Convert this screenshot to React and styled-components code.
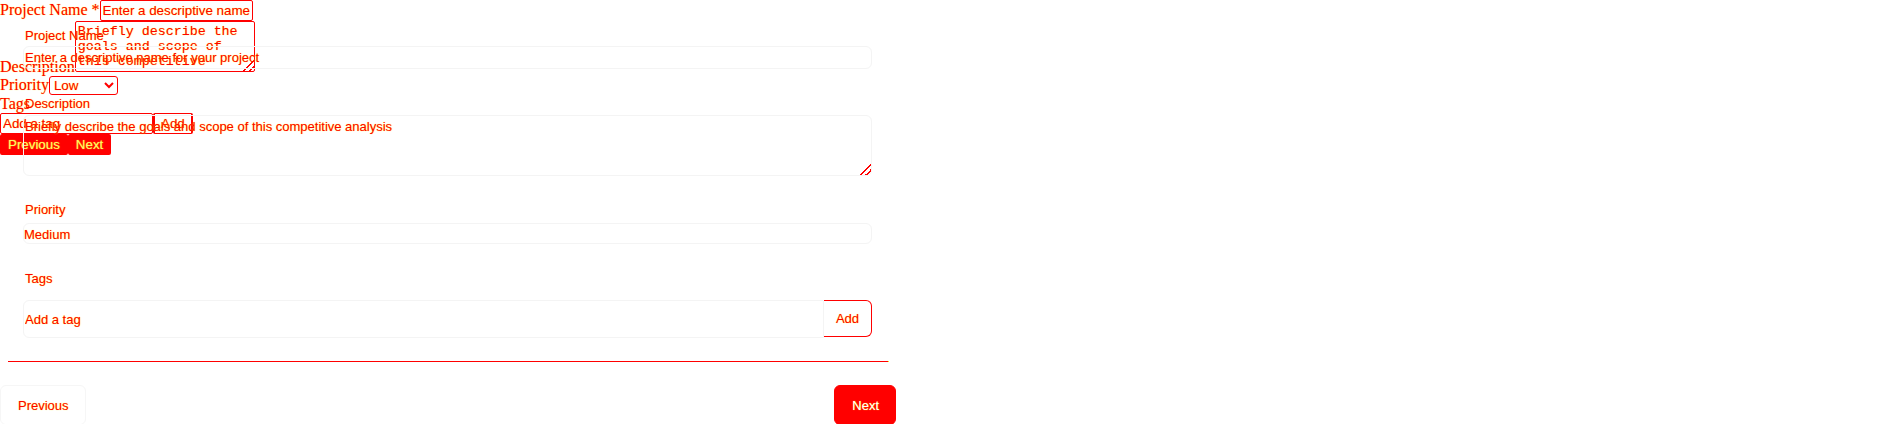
import React from 'react';
import styled, { createGlobalStyle } from 'styled-components';

const RED = '#ff0000';
const FRINGE = '0 0 1px rgba(255, 238, 0, 0.9)';
const FAINT = '#f4f4f4';
const RESIZER = `linear-gradient(135deg, transparent 62%, ${RED} 62%, ${RED} 69%, transparent 69%, transparent 80%, ${RED} 80%, ${RED} 87%, transparent 87%)`;

const GlobalStyle = createGlobalStyle`
  html, body {
    margin: 0;
    padding: 0;
    background: #ffffff;
  }
  body {
    font-family: "Liberation Serif", serif;
    font-size: 16px;
    color: ${RED};
  }
`;

const Page = styled.div`
  position: relative;
  width: 1904px;
  height: 424px;
  overflow: hidden;
`;

/* ---- bare form, browser-default look ---- */

const RawForm = styled.form`
  font-family: "Liberation Serif", serif;
  font-size: 16px;
  color: ${RED};
  text-shadow: ${FRINGE};
`;

const RawRow = styled.div``;

const RawLabel = styled.label``;

const RawInput = styled.input`
  box-sizing: border-box;
  width: 153px;
  height: 21px;
  padding: 1px 2px;
  border: 1px solid ${RED};
  border-radius: 2px;
  background: transparent;
  font-family: "Liberation Sans", Arial, sans-serif;
  font-size: 13.333px;
  color: ${RED};
  text-shadow: ${FRINGE};
  vertical-align: baseline;

  &::placeholder {
    color: ${RED};
    opacity: 1;
  }
`;

const RawTextarea = styled.textarea`
  box-sizing: border-box;
  width: 180px;
  height: 51px;
  padding: 2px;
  border: 1px solid ${RED};
  border-radius: 2px;
  background: transparent;
  font-family: "Liberation Mono", monospace;
  font-size: 13.333px;
  line-height: 15px;
  overflow: hidden;
  text-shadow: ${FRINGE};
  vertical-align: baseline;

  &::placeholder {
    color: ${RED};
    opacity: 1;
  }

  &::-webkit-resizer {
    background: ${RESIZER};
  }
`;

const RawSelect = styled.select`
  box-sizing: border-box;
  width: 69px;
  height: 19px;
  border: 1px solid ${RED};
  border-radius: 3px;
  background: transparent;
  font-family: "Liberation Sans", Arial, sans-serif;
  font-size: 13.333px;
  color: ${RED};
  text-shadow: ${FRINGE};
`;

const RawButton = styled.button`
  box-sizing: border-box;
  height: 21px;
  padding: 1px 6px;
  margin: 0;
  border: 2px solid ${RED};
  border-width: ${(p) => (p.$filled ? '2px' : '1px 2px')};
  border-radius: 2px;
  background: ${(p) => (p.$filled ? RED : 'transparent')};
  font-family: "Liberation Sans", Arial, sans-serif;
  font-size: 13.333px;
  color: ${(p) => (p.$filled ? '#fff36a' : RED)};
  text-shadow: ${(p) => (p.$filled ? '0 0 1px #ffee00' : FRINGE)};
  vertical-align: baseline;
`;

/* ---- styled wizard panel, drawn over the bare form ---- */

const Panel = styled.div`
  position: absolute;
  top: 0;
  left: 0;
  width: 896px;
  font-family: "Liberation Sans", Arial, sans-serif;
  font-size: 13px;
  line-height: 15px;
  color: ${RED};
  text-shadow: ${FRINGE};
`;

const Body = styled.div`
  display: flex;
  flex-direction: column;
  padding: 28px 24px 0 23px;
`;

const Field = styled.div`
  display: flex;
  flex-direction: column;
  gap: ${(p) => p.$gap || 4}px;
  margin-top: ${(p) => p.$top || 0}px;
`;

const Label = styled.label`
  display: block;
  padding-left: 2px;
`;

const TextInput = styled.input`
  box-sizing: border-box;
  width: 100%;
  height: ${(p) => p.$h || 23}px;
  padding: 0 1px;
  border: 1px solid ${FAINT};
  border-radius: ${(p) => (p.$joined ? '6px 0 0 6px' : '6px')};
  background: transparent;
  font: inherit;
  color: ${RED};
  text-shadow: ${FRINGE};
  outline: none;

  &::placeholder {
    color: ${RED};
    opacity: 1;
  }
`;

const TextArea = styled.textarea`
  box-sizing: border-box;
  width: 100%;
  height: 61px;
  padding: 3px 1px;
  border: 1px solid ${FAINT};
  border-radius: 6px;
  background: transparent;
  font: inherit;
  color: ${RED};
  text-shadow: ${FRINGE};
  resize: vertical;
  outline: none;

  &::placeholder {
    color: ${RED};
    opacity: 1;
  }

  &::-webkit-resizer {
    background: ${RESIZER};
  }
`;

const Select = styled.select`
  box-sizing: border-box;
  width: 100%;
  height: 21px;
  padding: 1px 0 0 0;
  border: 1px solid ${FAINT};
  border-radius: 6px;
  background: transparent;
  appearance: none;
  font: inherit;
  color: ${RED};
  text-shadow: ${FRINGE};
  outline: none;
`;

const TagRow = styled.div`
  display: flex;
  align-items: flex-start;
`;

const AddButton = styled.button`
  box-sizing: border-box;
  flex: none;
  width: 48px;
  height: 37px;
  border: 1px solid ${RED};
  border-left: none;
  border-radius: 0 6px 6px 0;
  background: transparent;
  font: inherit;
  color: ${RED};
  text-shadow: ${FRINGE};
`;

const Divider = styled.div`
  height: 1px;
  margin: 23px 8px 0;
  background: ${RED};
  box-shadow: 1px 0 0 #ffee00;
`;

const Footer = styled.div`
  display: flex;
  justify-content: space-between;
  align-items: center;
  margin-top: 23px;
`;

const NavButton = styled.button`
  box-sizing: border-box;
  height: 40px;
  padding: 0 16px 0 17px;
  border: 1px solid ${(p) => (p.$primary ? RED : '#f6f6f6')};
  border-radius: 6px;
  background: ${(p) => (p.$primary ? RED : 'transparent')};
  font: inherit;
  color: ${(p) => (p.$primary ? '#ffffff' : RED)};
  text-shadow: ${(p) => (p.$primary ? '0 0 1px #ffee00' : FRINGE)};
`;

const App = () => {
  return (
    <Page>
      <GlobalStyle />

      <RawForm onSubmit={(e) => e.preventDefault()}>
        <RawRow>
          <RawLabel>Project Name *</RawLabel><RawInput placeholder="Enter a descriptive name" />
        </RawRow>
        <RawRow>
          <RawLabel>Description</RawLabel><RawTextarea rows={3} placeholder="Briefly describe the goals and scope of this competitive analysis" />
        </RawRow>
        <RawRow>
          <RawLabel>Priority</RawLabel><RawSelect defaultValue="low">
            <option value="low">Low</option>
            <option value="medium">Medium</option>
            <option value="high">High</option>
          </RawSelect>
        </RawRow>
        <RawRow>
          <RawLabel>Tags</RawLabel>
          <RawRow>
            <RawInput placeholder="Add a tag" /><RawButton type="button">Add</RawButton>
          </RawRow>
        </RawRow>
        <RawRow>
          <RawButton type="button" $filled>Previous</RawButton><RawButton type="button" $filled>Next</RawButton>
        </RawRow>
      </RawForm>

      <Panel>
        <Body>
          <Field $gap={3}>
            <Label>Project Name</Label>
            <TextInput placeholder="Enter a descriptive name for your project" />
          </Field>
          <Field $top={27} $gap={4}>
            <Label>Description</Label>
            <TextArea placeholder="Briefly describe the goals and scope of this competitive analysis" />
          </Field>
          <Field $top={26} $gap={6}>
            <Label>Priority</Label>
            <Select defaultValue="medium">
              <option value="low">Low</option>
              <option value="medium">Medium</option>
              <option value="high">High</option>
            </Select>
          </Field>
          <Field $top={27} $gap={14}>
            <Label>Tags</Label>
            <TagRow>
              <TextInput $h={38} $joined placeholder="Add a tag" />
              <AddButton type="button">Add</AddButton>
            </TagRow>
          </Field>
        </Body>
        <Divider />
        <Footer>
          <NavButton type="button">Previous</NavButton>
          <NavButton type="button" $primary>Next</NavButton>
        </Footer>
      </Panel>
    </Page>
  );
};

export default App;
